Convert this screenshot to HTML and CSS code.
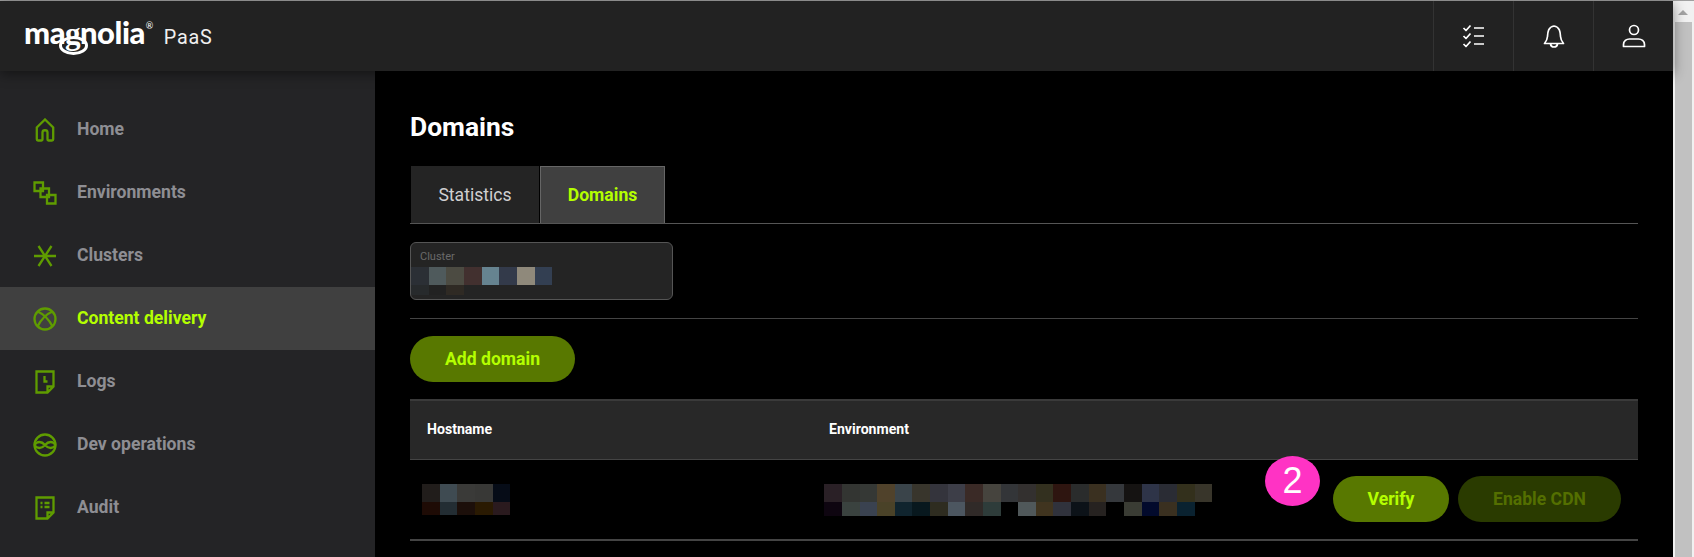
FILE: index.html
```html
<!DOCTYPE html>
<html lang="en">
<head>
<meta charset="utf-8">
<title>Domains</title>
<link rel="stylesheet" href="styles.css">
</head>
<body>
<div class="page">
  <div class="app">
    <header class="topbar">
      <div class="brand">
        <span class="logo">ma<span class="logo-g">g</span>nolia<sup class="logo-r">®</sup></span>
        <span class="product">PaaS</span>
      </div>
      <div class="top-actions">
        <button class="top-btn" aria-label="Tasks">
          <svg width="24" height="24" viewBox="0 0 24 24" class="ticon"><path d="M1.500 4l2.500 2.500L8.500 1.500M1.500 12l2.500 2.500L8.500 9.500M1.500 20l2.500 2.500L8.500 17.500M12 4h10M12 12h10M12 20h10"/></svg>
        </button>
        <button class="top-btn" aria-label="Notifications">
          <svg width="24" height="26" viewBox="0 0 24 26" class="ticon"><path d="M2.500 20.500c1.700-2 2.700-3.500 3-7 .3-4 .3-9.500 6.500-10.500 6.200 1 6.200 6.500 6.500 10.500.3 3.500 1.300 5 3 7zM8.500 21c.3 2 1.600 3 3.500 3s3.200-1 3.500-3"/></svg>
        </button>
        <button class="top-btn" aria-label="Account">
          <svg width="24" height="24" viewBox="0 0 24 24" class="ticon"><circle cx="12" cy="6" r="4.500"/><path d="M1.500 22.500v-2c0-3.500 3-5.500 6-5.500h9c3 0 6 2 6 5.500v2z"/></svg>
        </button>
      </div>
    </header>
    <div class="body">
      <nav class="sidebar">
        <a class="nav-item"><svg class="nicon" viewBox="0 0 24 24"><path d="M5 22.500h3.500c.6 0 1-.4 1-1v-7c0-3 5-3 5 0v7c0 .6.4 1 1 1H19c.8 0 1.200-.4 1.200-1.200V9.500L12 1.500 3.800 9.500v11.800c0 .8.4 1.200 1.200 1.200z"/></svg><span>Home</span></a>
        <a class="nav-item"><svg class="nicon" viewBox="0 0 24 24"><path d="M1.500 1.500h8.500v8.500H1.500zM7.500 7.500H16V16H7.500zM14 14h8.500v8.500H14z"/></svg><span>Environments</span></a>
        <a class="nav-item"><svg class="nicon" viewBox="0 0 24 24"><path d="M1 12h22M5.500 2l13 20M18.500 2l-13 20"/></svg><span>Clusters</span></a>
        <a class="nav-item is-active"><svg class="nicon" viewBox="0 0 24 24"><circle cx="12" cy="12" r="10.500"/><path d="M4.500 4.500c6 2.500 11.500 8 15 15M19.500 4.500C13.500 7 8 12.500 4.500 19.500"/></svg><span>Content delivery</span></a>
        <a class="nav-item"><svg class="nicon" viewBox="0 0 24 24"><path d="M3.500 1.500h17v15l-6 6h-11zM14.500 22.500v-6h6M11.500 6v5.500h3"/></svg><span>Logs</span></a>
        <a class="nav-item"><svg class="nicon" viewBox="0 0 24 24"><circle cx="12" cy="12" r="10.500"/><path d="M1.500 12c2.500-4 7-4 10.500 0s8 4 10.500 0M1.500 12c2.500 4 7 4 10.500 0s8-4 10.500 0"/></svg><span>Dev operations</span></a>
        <a class="nav-item"><svg class="nicon" viewBox="0 0 24 24"><path d="M3.500 1.500h17v15l-6 6h-11zM14.500 22.500v-6h6M7.500 7h2M11.500 7h5M7.500 11h2M11.500 11h5"/></svg><span>Audit</span></a>
      </nav>
      <main class="content">
        <h1 class="title">Domains</h1>
        <div class="tabs">
          <div class="tab">Statistics</div>
          <div class="tab is-active">Domains</div>
        </div>
        <div class="filter">
          <div class="select">
            <span class="select-label">Cluster</span>
            <svg class="mosaic-cluster" width="160" height="30" viewBox="0 0 160 30" shape-rendering="crispEdges">
              <rect x="0" width="18" height="18" fill="#2b2f35"/><rect x="18" width="18" height="18" fill="#4f5a5c"/><rect x="35" width="18" height="18" fill="#4c4b42"/><rect x="53" width="18" height="18" fill="#42302f"/><rect x="71" width="18" height="18" fill="#668390"/><rect x="88" width="18" height="18" fill="#333a4a"/><rect x="106" width="18" height="18" fill="#8f897b"/><rect x="124" width="17" height="18" fill="#333f52"/>
              <rect x="0" y="18" width="18" height="10" fill="#272a2c"/><rect x="18" y="18" width="18" height="10" fill="#222222"/><rect x="35" y="18" width="18" height="10" fill="#2f2a24"/>
            </svg>
          </div>
        </div>
        <div class="toolbar"><button class="btn">Add domain</button></div>
        <div class="table">
          <div class="thead">
            <div class="col-host">Hostname</div>
            <div class="col-env">Environment</div>
          </div>
          <div class="trow">
            <div class="col-host">
              <svg width="88" height="31" viewBox="0 0 88 31" shape-rendering="crispEdges">
                <rect x="0" width="18" height="18" fill="#211d1b"/><rect x="18" width="17" height="18" fill="#3f4b52"/><rect x="35" width="18" height="18" fill="#3a3a38"/><rect x="53" width="18" height="18" fill="#383836"/><rect x="71" width="17" height="18" fill="#060c17"/>
                <rect x="0" y="18" width="18" height="13" fill="#1e0b05"/><rect x="18" y="18" width="17" height="13" fill="#232d33"/><rect x="35" y="18" width="18" height="13" fill="#1c0f0a"/><rect x="53" y="18" width="18" height="13" fill="#2a1a02"/><rect x="71" y="18" width="17" height="13" fill="#2a1a1e"/>
              </svg>
            </div>
            <div class="col-env">
              <svg width="388" height="32" viewBox="0 0 388 32" shape-rendering="crispEdges">
                <rect x="0" width="18" height="18" fill="#2a2026"/><rect x="18" width="18" height="18" fill="#333532"/><rect x="36" width="17" height="18" fill="#353835"/><rect x="53" width="18" height="18" fill="#50422b"/><rect x="71" width="17" height="18" fill="#3a444a"/><rect x="88" width="18" height="18" fill="#38352c"/><rect x="106" width="18" height="18" fill="#34343c"/><rect x="124" width="17" height="18" fill="#3d3e48"/><rect x="141" width="18" height="18" fill="#3a2a26"/><rect x="159" width="18" height="18" fill="#46443e"/><rect x="177" width="17" height="18" fill="#333538"/><rect x="194" width="18" height="18" fill="#33302f"/><rect x="212" width="17" height="18" fill="#33301f"/><rect x="229" width="18" height="18" fill="#2e1510"/><rect x="247" width="18" height="18" fill="#2a2c2c"/><rect x="265" width="17" height="18" fill="#3a3020"/><rect x="282" width="18" height="18" fill="#35383c"/><rect x="300" width="18" height="18" fill="#151312"/><rect x="318" width="17" height="18" fill="#2e3448"/><rect x="335" width="18" height="18" fill="#2a2c34"/><rect x="353" width="18" height="18" fill="#33301c"/><rect x="371" width="17" height="18" fill="#38352a"/>
                <rect x="0" y="18" width="18" height="14" fill="#0e0510"/><rect x="18" y="18" width="18" height="14" fill="#3a423f"/><rect x="36" y="18" width="17" height="14" fill="#3a4250"/><rect x="53" y="18" width="18" height="14" fill="#4a4228"/><rect x="71" y="18" width="17" height="14" fill="#10242e"/><rect x="88" y="18" width="18" height="14" fill="#08181e"/><rect x="106" y="18" width="18" height="14" fill="#2e2c20"/><rect x="124" y="18" width="17" height="14" fill="#4c5660"/><rect x="141" y="18" width="18" height="14" fill="#302a28"/><rect x="159" y="18" width="18" height="14" fill="#2e3c3a"/><rect x="194" y="18" width="18" height="14" fill="#50585a"/><rect x="212" y="18" width="17" height="14" fill="#40341f"/><rect x="229" y="18" width="18" height="14" fill="#30323c"/><rect x="247" y="18" width="18" height="14" fill="#0c1218"/><rect x="265" y="18" width="17" height="14" fill="#262220"/><rect x="300" y="18" width="18" height="14" fill="#3a3c34"/><rect x="318" y="18" width="17" height="14" fill="#020a2c"/><rect x="335" y="18" width="18" height="14" fill="#3a3020"/><rect x="353" y="18" width="18" height="14" fill="#0a2230"/>
              </svg>
            </div>
            <div class="col-actions">
              <span class="badge">2</span>
              <button class="btn btn-verify">Verify</button>
              <button class="btn btn-disabled">Enable CDN</button>
            </div>
          </div>
        </div>
      </main>
    </div>
  </div>
  <div class="scrollbar">
    <div class="scroll-up"></div>
    <div class="scroll-thumb"></div>
  </div>
</div>
</body>
</html>
```
FILE: styles.css
```css
* { box-sizing: border-box; }
html, body { margin: 0; height: 100%; overflow: hidden; }
body { background: #000; font-family: Roboto, "Liberation Sans", sans-serif; color: #fff; }
.page { display: flex; height: 557px; border-top: 1px solid #a0a0a0; }
.app { flex: 1; min-width: 0; display: flex; flex-direction: column; background: #000; }
.topbar { height: 70px; flex: none; background: #222; display: flex; align-items: center; justify-content: space-between; padding-left: 24px; position: relative; z-index: 2; box-shadow: 0 3px 12px rgba(0,0,0,.45); }
.brand { display: flex; align-items: baseline; gap: 11px; padding-bottom: 7px; }
.logo { position: relative; font-family: Lato, "Open Sans", sans-serif; font-weight: 900; font-size: 31px; line-height: 30px; letter-spacing: -.5px; color: #fff; }
.logo-g { position: relative; font-family: "Liberation Serif", serif; font-weight: 700; }
.logo-g::after { content: ""; position: absolute; left: -6px; right: -8px; top: 20px; height: 13px; border: 3px solid #fff; border-radius: 50%; }
.logo-r { font-size: 9px; font-weight: 400; vertical-align: 15px; line-height: 0; margin-left: 1px; }
.product { font-size: 19.8px; letter-spacing: .8px; color: #f0f0f0; font-weight: 400; }
.top-actions { display: flex; height: 100%; }
.top-btn { width: 80px; height: 100%; background: none; border: 0; border-left: 1px solid #333; padding: 0; display: flex; align-items: center; justify-content: center; }
.ticon { fill: none; stroke: #fff; stroke-width: 1.7; stroke-linejoin: round; }
.body { flex: 1; min-height: 0; display: flex; }
.sidebar { width: 375px; flex: none; background: #242426; padding-top: 27px; }
.nav-item { height: 63px; display: flex; align-items: center; padding-left: 33px; gap: 20px; font-size: 17.6px; font-weight: 700; color: #8e8e93; }
.nav-item span { position: relative; bottom: 1px; }
.nicon { width: 24px; height: 24px; fill: none; stroke: #5f9c00; stroke-width: 2.3; }
.nav-item.is-active { background: #404040; color: #b4ff00; }
.content { flex: 1; min-width: 0; padding: 0 35px; }
.title { margin: 42px 0 0; font-size: 26.4px; line-height: 28px; font-weight: 700; }
.tabs { margin-top: 25px; display: flex; gap: 1px; height: 58px; border-bottom: 1px solid #555; padding-left: 1px; }
.tab { width: 128px; background: #242424; display: flex; align-items: center; justify-content: center; font-size: 17.6px; color: #d0d0d0; }
.tab.is-active { width: 125px; background: #404040; border: 1px solid #666; border-bottom: 0; color: #b4ff00; font-weight: 700; }
.filter { padding: 18px 0; border-bottom: 1px solid #444; }
.select { width: 263px; height: 58px; background: #242424; border: 1px solid #555; border-radius: 6px; padding: 7px 9px; position: relative; }
.select-label { display: block; font-size: 11px; line-height: 14px; color: #6a6a6a; }
.mosaic-cluster { position: absolute; left: 0; top: 24px; }
.toolbar { padding: 17px 0; }
.btn { height: 46px; border: 0; border-radius: 23px; background: #587800; color: #b4ff00; font-family: inherit; font-size: 17.6px; font-weight: 700; padding: 0; width: 165px; }
.thead { height: 61px; background: #282828; border-top: 2px solid #3a3a3a; border-bottom: 1px solid #444; display: flex; align-items: center; font-size: 14.1px; font-weight: 700; padding-bottom: 3px; }
.col-host { width: 402px; flex: none; padding-left: 17px; }
.col-env { flex: none; }
.thead .col-env { padding-left: 17px; }
.trow { height: 81px; border-bottom: 2px solid #444; display: flex; align-items: center; position: relative; }
.trow .col-host { padding-left: 12px; width: 414px; }
.trow svg { display: block; }
.col-actions { display: flex; gap: 9px; position: absolute; right: 17px; top: 16px; }
.btn-verify { width: 116px; }
.btn-disabled { width: 163px; background: #2a3b00; color: #546f00; }
.badge { position: absolute; left: -68px; top: -20px; width: 55px; height: 50px; border-radius: 50%; background: #ff33c4; color: #fff; font-family: "Liberation Sans", sans-serif; font-size: 36px; line-height: 50px; text-align: center; }
.scrollbar { width: 21px; flex: none; background: #f1f1f1; display: flex; flex-direction: column; }
.scroll-up { height: 21px; position: relative; }
.scroll-up::after { content: ""; position: absolute; left: 5px; top: 9px; border-left: 5px solid transparent; border-right: 5px solid transparent; border-bottom: 5px solid #a3a3a3; }
.scroll-thumb { flex: 1; margin: 0 2px; background: #c1c1c1; }
```
